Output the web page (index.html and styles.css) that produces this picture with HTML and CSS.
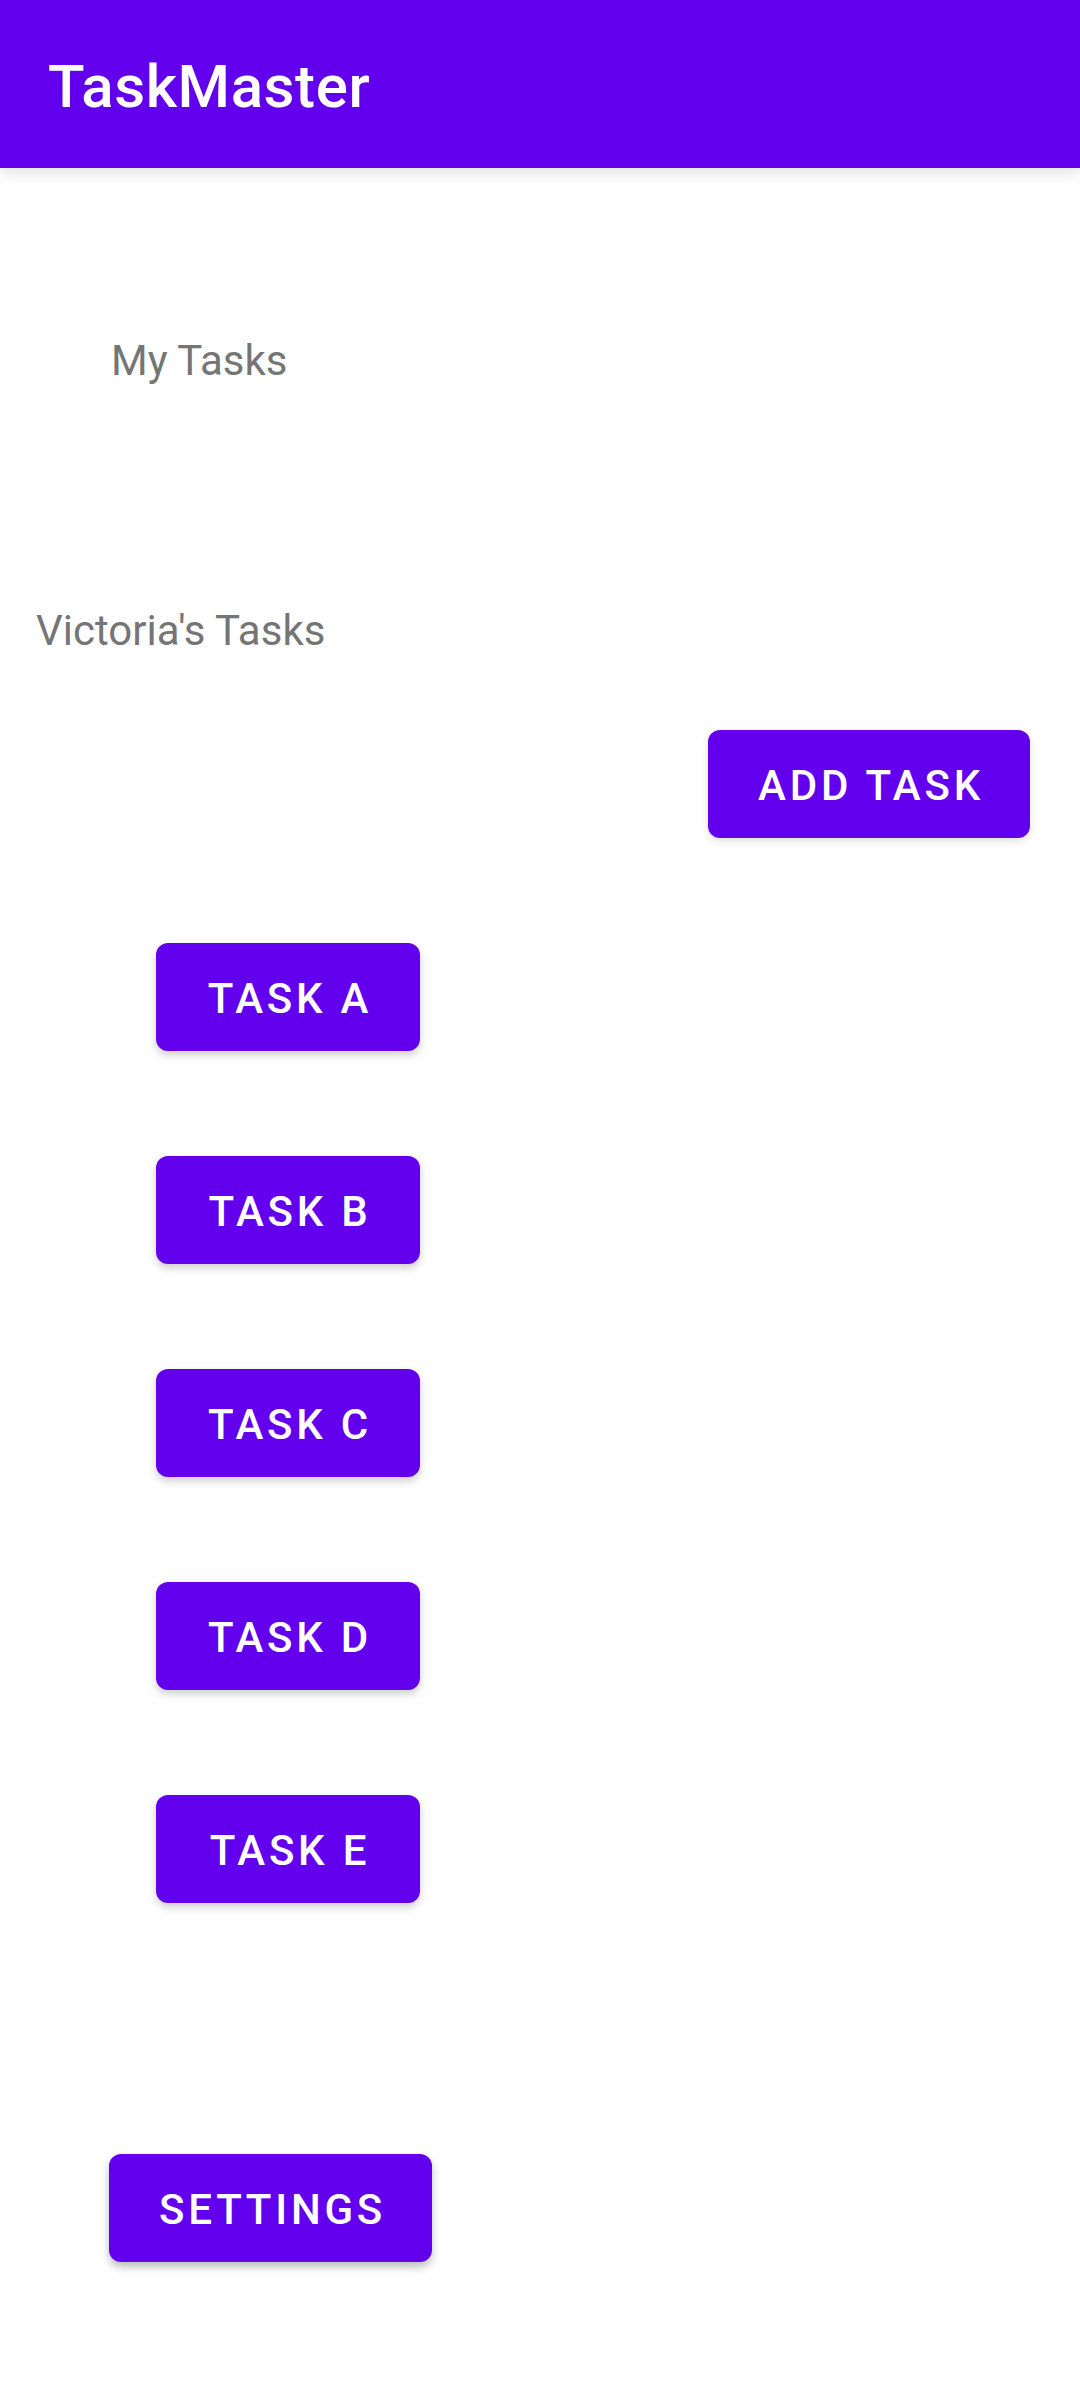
FILE: index.html
```html
<!DOCTYPE html>
<html lang="en">
<head>
<meta charset="utf-8">
<meta name="viewport" content="width=device-width, initial-scale=1">
<title>TaskMaster</title>
<link rel="stylesheet" href="styles.css">
</head>
<body>
<header class="app-bar"><h1 class="app-title">TaskMaster</h1></header>
<main class="content">
<h2 class="label label-heading">My Tasks</h2>
<p class="label label-user">Victoria's Tasks</p>
<button class="button button-add" type="button">ADD TASK</button>
<div class="task-list">
<button class="button button-task" type="button">TASK A</button>
<button class="button button-task" type="button">TASK B</button>
<button class="button button-task" type="button">TASK C</button>
<button class="button button-task" type="button">TASK D</button>
<button class="button button-task" type="button">TASK E</button>
</div>
<button class="button button-settings" type="button">SETTINGS</button>
</main>
</body>
</html>
```
FILE: styles.css
```css
body {
  margin: 0;
  background: #fff;
  font-family: Roboto, sans-serif;
}

.app-bar {
  display: flex;
  align-items: center;
  box-sizing: border-box;
  height: 168px;
  padding: 6px 48px 0;
  background: #6200ee;
  box-shadow: 0 4px 14px rgba(0, 0, 0, 0.13);
}

.app-title {
  margin: 0;
  color: #fff;
  font-size: 60px;
  font-weight: 500;
  letter-spacing: 0.01em;
  line-height: 72px;
}

.content {
  display: flex;
  flex-direction: column;
  align-items: flex-start;
  padding: 165px 50px 0 36px;
}

.label {
  margin: 0;
  color: #757575;
  font-size: 42px;
  font-weight: 400;
  line-height: 56px;
}

.label-heading {
  margin-left: 75px;
}

.label-user {
  margin-top: 214px;
}

/* The left padding balances the letter spacing after the last letter. */
.button {
  height: 108px;
  padding: 2px 46px 0 50px;
  border: 0;
  border-radius: 12px;
  background: #6200ee;
  box-shadow: 0 4px 8px rgba(0, 0, 0, 0.2);
  color: #fff;
  font-family: inherit;
  font-size: 42px;
  font-weight: 500;
  letter-spacing: 0.09em;
  white-space: nowrap;
}

.button-add {
  align-self: flex-end;
  margin-top: 71px;
  box-shadow: 0 3px 8px rgba(0, 0, 0, 0.13);
}

.task-list {
  display: flex;
  flex-direction: column;
  gap: 105px;
  margin: 105px 0 0 120px;
}

.button-task {
  min-width: 264px;
}

.button-settings {
  margin: 251px 0 138px 73px;
  box-shadow: 0 5px 9px rgba(0, 0, 0, 0.26);
}
```
